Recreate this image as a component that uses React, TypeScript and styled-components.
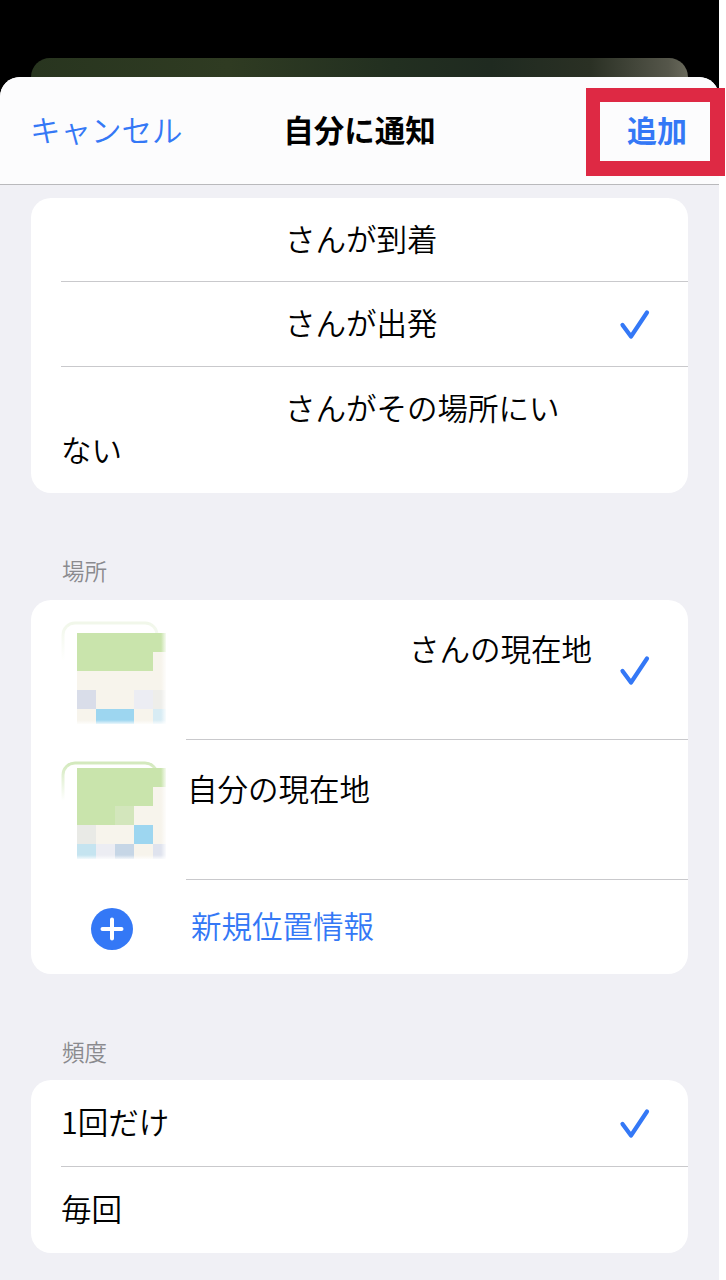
import React from "react";
import styled, { createGlobalStyle } from "styled-components";

const colors = {
    blue: "#3478f6",
    page: "#f0f0f5",
    line: "#c9c9cc",
    label: "#8a8a8e",
};

const GlobalStyle = createGlobalStyle`
    html, body {
        margin: 0;
        padding: 0;
        background: #fff;
        overflow: hidden;
    }

    body {
        font-family: "Noto Sans CJK JP", "Noto Sans", sans-serif;
        font-weight: 350;
        color: #000;
    }
`;

const Screen = styled.div`
    position: relative;
    width: 726px;
    height: 1280px;
    overflow: hidden;
`;

const Phone = styled.div`
    display: flex;
    flex-direction: column;
    width: 719px;
    height: 1280px;
    padding-top: 58px;
    box-sizing: border-box;
    background: #000;
`;

const BehindCard = styled.div`
    flex: none;
    height: 19px;
    margin: 0 31px;
    border-radius: 20px 20px 0 0;
    background: linear-gradient(
        90deg,
        #28351f 0%,
        #2f3b22 30%,
        #222f20 55%,
        #1f2a20 70%,
        #2a3024 85%,
        #55564a 97%,
        #6a6a5c 100%
    );
`;

const Sheet = styled.div`
    flex: 1;
    display: flex;
    flex-direction: column;
    border-radius: 20px 20px 0 0;
    overflow: hidden;
    background: ${colors.page};
`;

const Header = styled.header`
    flex: none;
    display: grid;
    grid-template-columns: 1fr auto 1fr;
    align-items: center;
    height: 108px;
    padding: 0 32px 4px;
    box-sizing: border-box;
    background: #fcfcfd;
    border-bottom: 1px solid #b9b9bc;
`;

const Cancel = styled.span`
    margin-left: -2px;
    font-size: 30.5px;
    line-height: 40px;
    color: ${colors.blue};
`;

const Title = styled.h1`
    margin: 0;
    font-size: 30.5px;
    line-height: 40px;
    font-weight: 700;
`;

const Add = styled.span`
    justify-self: end;
    font-size: 30px;
    line-height: 40px;
    font-weight: 700;
    color: ${colors.blue};
`;

const Content = styled.main`
    display: flex;
    flex-direction: column;
    padding: 13px 31px 0;
`;

const SectionLabel = styled.div<{ $top: number; $bottom: number }>`
    margin: ${p => p.$top}px 0 ${p => p.$bottom}px 31px;
    font-size: 22.5px;
    line-height: 28px;
    color: ${colors.label};
`;

const Card = styled.section`
    background: #fff;
    border-radius: 20px;
    overflow: hidden;
`;

const OptionRow = styled.div`
    padding-left: 30px;
`;

const OptionBody = styled.div<{ $height?: number; $last?: boolean }>`
    display: flex;
    align-items: center;
    justify-content: space-between;
    box-sizing: border-box;
    min-height: ${p => p.$height ?? 85}px;
    padding-right: 37px;
    border-bottom: ${p => (p.$last ? "none" : `1px solid ${colors.line}`)};
`;

const OptionText = styled.div<{ $indent?: number; $width?: number }>`
    width: ${p => (p.$width ? `${p.$width}px` : "auto")};
    margin-bottom: 4px;
    font-size: 30.5px;
    line-height: 42px;
    text-indent: ${p => p.$indent ?? 0}px;
`;

const LocationRow = styled.div`
    display: flex;
    padding-left: 30px;
`;

const ThumbCell = styled.div`
    flex: none;
    width: 125px;
    padding-top: 21px;
`;

const LocationBody = styled.div<{ $last?: boolean }>`
    flex: 1;
    display: flex;
    align-items: center;
    justify-content: space-between;
    box-sizing: border-box;
    height: 140px;
    padding-right: 37px;
    border-bottom: ${p => (p.$last ? "none" : `1px solid ${colors.line}`)};
`;

const LocationText = styled.div<{ $indent: number }>`
    align-self: flex-start;
    margin: 27px 0 0 ${p => p.$indent}px;
    font-size: 30.5px;
    line-height: 42px;
    white-space: nowrap;
`;

const NewRow = styled.div`
    display: flex;
    align-items: center;
    height: 94px;
`;

const PlusCell = styled.div`
    flex: none;
    display: flex;
    justify-content: center;
    width: 162px;
    margin-top: 4px;
`;

const NewLabel = styled.span`
    margin: 0 0 4px -2px;
    font-size: 30.5px;
    line-height: 42px;
    color: ${colors.blue};
`;

const Highlight = styled.div`
    position: absolute;
    left: 586px;
    top: 88px;
    width: 139px;
    height: 88px;
    box-sizing: border-box;
    border-style: solid;
    border-color: #de2944;
    border-width: 14px 15px 15px 14px;
`;

const CheckIcon = () => (
    <svg width="34" height="34" viewBox="0 0 34 34" fill="none">
        <path d="M5.5 18 L14 29.5 L30 5.5" stroke={colors.blue} strokeWidth="4.2" strokeLinecap="round" strokeLinejoin="round" />
    </svg>
);

const PlusIcon = () => (
    <svg width="42" height="42" viewBox="0 0 42 42">
        <circle cx="21" cy="21" r="21" fill={colors.blue} />
        <path d="M11.5 21 H30.5 M21 11.5 V30.5" stroke="#fff" strokeWidth="4" strokeLinecap="round" />
    </svg>
);

// blurred map tiles, 5 columns x 5 rows
const g = "#c9e4ac";
const c = "#f7f4ec";
const b = "#9dd6f0";

const thumbOther = {
    top: 12,
    rim: "#f1f7ea",
    tiles: [
        [g, g, g, g, g],
        [g, g, g, g, c],
        [c, c, c, c, c],
        ["#d9dde9", c, c, "#ecedf3", "#eeeeea"],
        [c, b, b, c, "#d8ecf4"],
    ],
};

const thumbSelf = {
    top: 7,
    rim: "#d3e9bd",
    tiles: [
        [g, g, g, g, g],
        [g, g, g, g, c],
        [g, g, "#d3e6bc", c, c],
        ["#e9eae6", c, c, b, c],
        ["#c5e4f0", "#ecedf3", "#c6d6e6", c, "#dfe3ee"],
    ],
};

const Thumb = ({ id, map }: { id: string; map: typeof thumbOther }) => (
    <svg width="106" height="104" viewBox="0 0 106 104" style={{ display: "block" }}>
        <defs>
            <filter id={`soft-${id}`} x="-5%" y="-5%" width="110%" height="110%">
                <feGaussianBlur stdDeviation="0.5" />
            </filter>
            <linearGradient id={`rim-${id}`} x1="0" y1="0" x2="0" y2="1">
                <stop offset="0" stopColor={map.rim} />
                <stop offset="0.4" stopColor={map.rim} stopOpacity="0" />
            </linearGradient>
            <linearGradient id={`fade-r-${id}`} x1="0" y1="0" x2="1" y2="0">
                <stop offset="0" stopColor="#fff" stopOpacity="0" />
                <stop offset="1" stopColor="#fff" />
            </linearGradient>
            <linearGradient id={`fade-b-${id}`} x1="0" y1="0" x2="0" y2="1">
                <stop offset="0" stopColor="#fff" stopOpacity="0" />
                <stop offset="1" stopColor="#fff" />
            </linearGradient>
        </defs>
        <rect x="2" y="2" width="94" height="94" rx="12" fill="none" stroke={`url(#rim-${id})`} strokeWidth="3" />
        <g filter={`url(#soft-${id})`}>
            {map.tiles.map((row, r) =>
                row.map((color, col) => (
                    <rect
                        key={`${r}-${col}`}
                        x={16 + col * 19}
                        y={map.top + r * 19}
                        width={col === 4 ? 13 : 19.5}
                        height={r === 4 ? 15 : 19.5}
                        fill={color}
                    />
                )),
            )}
        </g>
        <rect x="100" y="0" width="6" height="104" fill={`url(#fade-r-${id})`} />
        <rect x="0" y={map.top + 87} width="106" height="5" fill={`url(#fade-b-${id})`} />
    </svg>
);

export default function App() {
    return (
        <Screen>
            <GlobalStyle />
            <Phone>
                <BehindCard />
                <Sheet>
                    <Header>
                        <Cancel>キャンセル</Cancel>
                        <Title>自分に通知</Title>
                        <Add>追加</Add>
                    </Header>
                    <Content>
                        <Card>
                            <OptionRow>
                                <OptionBody $height={84}>
                                    <OptionText $indent={224}>さんが到着</OptionText>
                                </OptionBody>
                            </OptionRow>
                            <OptionRow>
                                <OptionBody>
                                    <OptionText $indent={224}>さんが出発</OptionText>
                                    <CheckIcon />
                                </OptionBody>
                            </OptionRow>
                            <OptionRow>
                                <OptionBody $height={126} $last>
                                    <OptionText $indent={224} $width={510}>
                                        さんがその場所にいない
                                    </OptionText>
                                </OptionBody>
                            </OptionRow>
                        </Card>

                        <SectionLabel $top={63} $bottom={16}>場所</SectionLabel>
                        <Card>
                            <LocationRow>
                                <ThumbCell>
                                    <Thumb id="other" map={thumbOther} />
                                </ThumbCell>
                                <LocationBody>
                                    <LocationText $indent={223}>さんの現在地</LocationText>
                                    <CheckIcon />
                                </LocationBody>
                            </LocationRow>
                            <LocationRow>
                                <ThumbCell>
                                    <Thumb id="self" map={thumbSelf} />
                                </ThumbCell>
                                <LocationBody>
                                    <LocationText $indent={1}>自分の現在地</LocationText>
                                </LocationBody>
                            </LocationRow>
                            <NewRow>
                                <PlusCell>
                                    <PlusIcon />
                                </PlusCell>
                                <NewLabel>新規位置情報</NewLabel>
                            </NewRow>
                        </Card>

                        <SectionLabel $top={63} $bottom={15}>頻度</SectionLabel>
                        <Card>
                            <OptionRow>
                                <OptionBody $height={87}>
                                    <OptionText>1回だけ</OptionText>
                                    <CheckIcon />
                                </OptionBody>
                            </OptionRow>
                            <OptionRow>
                                <OptionBody $height={86} $last>
                                    <OptionText>毎回</OptionText>
                                </OptionBody>
                            </OptionRow>
                        </Card>
                    </Content>
                </Sheet>
            </Phone>
            <Highlight />
        </Screen>
    );
}
